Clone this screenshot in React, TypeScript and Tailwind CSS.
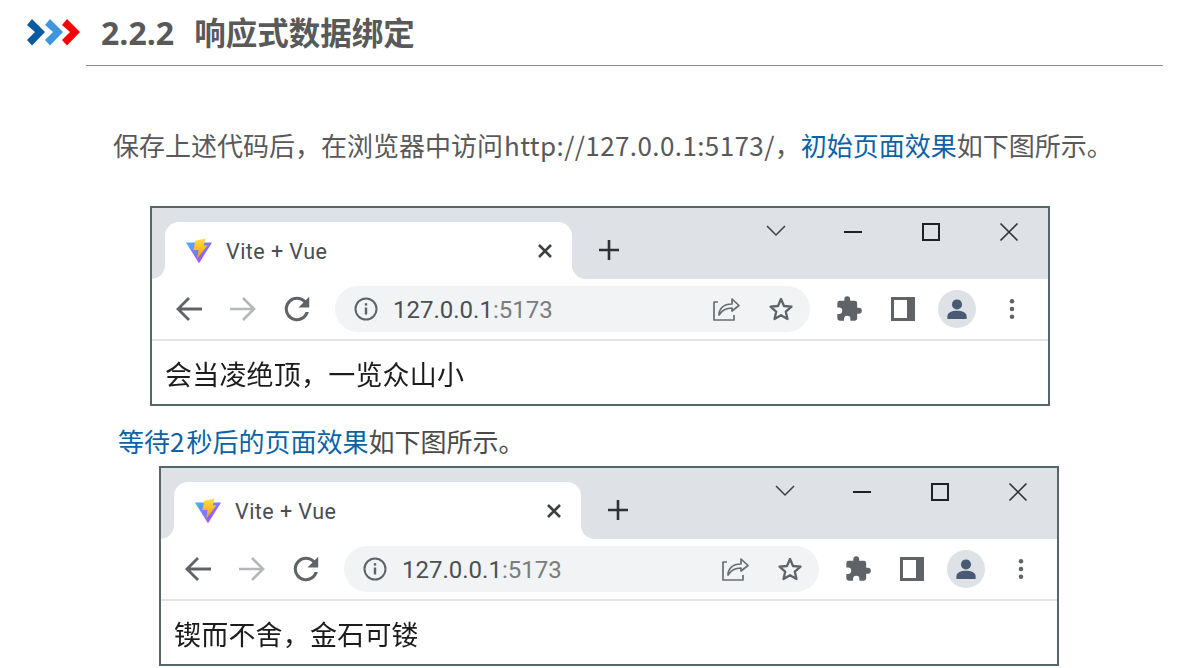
const CJK = "font-['Noto_Sans_CJK_SC','Noto_Sans',sans-serif]";

function Chevrons() {
  return (
    <svg width="54" height="28" viewBox="0 0 54 28" className="shrink-0">
      <polygon points="0,7 5,1 18,14 5,27.5 0,22 8,14" fill="#0a5aa3" />
      <polygon points="18,7 23,1 36,14 23,27.5 18,22 26,14" fill="#4096de" />
      <polygon points="35,7 40,1 53,14 40,27.5 35,22 43,14" fill="#fb0007" />
    </svg>
  );
}

function Favicon() {
  return (
    <svg width="28" height="28" viewBox="0 0 30 28">
      <defs>
        <linearGradient id="vb" x1="0" y1="0" x2="1" y2="1">
          <stop offset="0" stopColor="#41b5ff" />
          <stop offset="1" stopColor="#bd34fe" />
        </linearGradient>
        <linearGradient id="vy" x1="0" y1="0" x2="0" y2="1">
          <stop offset="0" stopColor="#ffe04a" />
          <stop offset="1" stopColor="#ff9a00" />
        </linearGradient>
      </defs>
      <polygon points="1,5 29,5 15,27" fill="url(#vb)" />
      <polygon points="11,3 22,0.500 20,8 24,8 13,22 14.500,13 9,13" fill="url(#vy)" />
    </svg>
  );
}

function Tab() {
  return (
    <div className="relative flex h-[57px] w-[407px] items-center rounded-t-[14px] bg-white pl-[20px] pr-[18px]">
      <span className="absolute bottom-0 left-[-14px] h-[14px] w-[14px] bg-white">
        <span className="block h-full w-full rounded-br-[14px] bg-[#dee1e6]" />
      </span>
      <span className="absolute bottom-0 right-[-14px] h-[14px] w-[14px] bg-white">
        <span className="block h-full w-full rounded-bl-[14px] bg-[#dee1e6]" />
      </span>
      <Favicon />
      <span className="ml-[13px] mt-[3px] font-['Roboto',sans-serif] text-[21.5px] tracking-[0.45px] text-[#4a4d51]">Vite + Vue</span>
      <svg width="18" height="18" viewBox="0 0 18 18" className="ml-auto" stroke="#3c4043" strokeWidth="2.6" fill="none">
        <path d="M3 3l12 12M15 3L3 15" />
      </svg>
    </div>
  );
}

function WindowControls() {
  return (
    <div className="ml-auto flex h-full items-start">
      <svg width="22" height="14" viewBox="0 0 22 14" className="mt-[16px]" stroke="#3c4043" strokeWidth="1.5" fill="none">
        <path d="M2 2l9 9 9-9" />
      </svg>
      <svg width="20" height="4" viewBox="0 0 20 4" className="ml-[56px] mt-[22px]" stroke="#202124" strokeWidth="2" fill="none">
        <path d="M1 2h18" />
      </svg>
      <svg width="18" height="18" viewBox="0 0 18 18" className="ml-[59px] mt-[15px]" stroke="#202124" strokeWidth="2" fill="none">
        <rect x="1" y="1" width="16" height="16" />
      </svg>
      <svg width="20" height="20" viewBox="0 0 20 20" className="ml-[59px] mr-[29px] mt-[14px]" stroke="#303236" strokeWidth="1.7" fill="none">
        <path d="M1.500 1.500l17 17M18.500 1.500l-17 17" />
      </svg>
    </div>
  );
}

function TabStrip() {
  return (
    <div className="flex h-[71px] items-end bg-[#dee1e6] pl-[13px]">
      <Tab />
      <svg width="24" height="24" viewBox="0 0 24 24" className="mb-[17px] ml-[25px]" stroke="#2f3134" strokeWidth="2.6" fill="none">
        <path d="M12 2v20M2 12h20" />
      </svg>
      <WindowControls />
    </div>
  );
}

function Toolbar() {
  return (
    <div className="flex h-[62px] items-center border-b-2 border-[#e3e4e6] bg-white">
      <svg width="28" height="28" viewBox="0 0 28 28" className="ml-[23px]" stroke="#5f6368" strokeWidth="2.8" fill="none">
        <path d="M27 14H3M14 3L3 14l11 11" />
      </svg>
      <svg width="28" height="28" viewBox="0 0 28 28" className="ml-[26px]" stroke="#b5b7ba" strokeWidth="2.6" fill="none">
        <path d="M1 14h24M14 3l11 11-11 11" />
      </svg>
      <svg width="26" height="26" viewBox="3.500 3.500 17 17" className="ml-[27px]" fill="#5f6368">
        <path d="M17.650 6.350A7.960 7.960 0 0 0 12 4a8 8 0 1 0 7.730 10h-2.080A6 6 0 1 1 12 6c1.660 0 3.140.690 4.220 1.780L13 11h7V4l-2.350 2.350z" />
      </svg>
      <div className="ml-[25px] flex h-[46px] w-[475px] items-center rounded-full bg-[#f1f3f4] pl-[18px]">
        <svg width="26" height="26" viewBox="0 0 26 26" fill="none" stroke="#5f6368" strokeWidth="2">
          <circle cx="13" cy="13" r="10.500" />
          <path d="M13 11.500v7" strokeWidth="2.400" />
          <path d="M13 7.200v2.400" strokeWidth="2.400" />
        </svg>
        <span className="ml-[14px] mt-[2px] font-['Roboto',sans-serif] text-[24px] leading-none text-[#4c4f53]">
          127.0.0.1<span className="text-[#797c80]">:5173</span>
        </span>
        <svg width="28" height="26" viewBox="0 0 28 26" className="ml-[160px]" fill="none" stroke="#6a6d71" strokeWidth="1.700" strokeLinejoin="round">
          <path d="M5 6H1V24H21V19" />
          <path d="M6 19C6 13 10 8 19 8V3L26 9.500 19 15V12C14 12 9 14 6 19z" />
        </svg>
        <svg width="26" height="26" viewBox="0 0 26 26" className="ml-[27px]" fill="none" stroke="#5f6368" strokeWidth="2.300" strokeLinejoin="round">
          <path d="M13 3l3 7 7.500.700-5.700 5 1.700 7.300L13 19.200 6.500 23l1.700-7.300-5.700-5L10 10z" />
        </svg>
      </div>
      <svg width="28" height="28" viewBox="0 0 24 24" className="ml-[25px]" fill="#5f6368">
        <path d="M20.500 11H19V7a2 2 0 0 0-2-2h-4V3.500a2.500 2.500 0 0 0-5 0V5H4a2 2 0 0 0-2 2v3.800h1.500a2.700 2.700 0 0 1 0 5.400H2V20a2 2 0 0 0 2 2h3.800v-1.500a2.700 2.700 0 0 1 5.400 0V22H17a2 2 0 0 0 2-2v-4h1.500a2.500 2.500 0 0 0 0-5z" />
      </svg>
      <div className="ml-[28px] flex h-[24px] w-[24px] justify-end border-[3px] border-[#5f6368] bg-white">
        <span className="h-full w-[5px] bg-[#5f6368]" />
      </div>
      <div className="ml-[23px] flex h-[38px] w-[38px] items-center justify-center rounded-full bg-[#dee1e6]">
        <svg width="22" height="22" viewBox="0 0 24 24" fill="#4a5a75">
          <circle cx="12" cy="7" r="5.500" />
          <path d="M1.500 23v-3c0-4 5-6 10.500-6s10.500 2 10.500 6v3z" />
        </svg>
      </div>
      <svg width="6" height="22" viewBox="0 0 6 24" className="ml-[33px]" fill="#5f6368">
        <circle cx="3" cy="3.500" r="2.500" />
        <circle cx="3" cy="12" r="2.500" />
        <circle cx="3" cy="20.500" r="2.500" />
      </svg>
    </div>
  );
}

function Browser({ text, className }: { text: string; className: string }) {
  return (
    <div className={`w-[900px] overflow-hidden border-2 border-[#566767] bg-white ${className}`}>
      <div className="blur-[0.35px]">
        <TabStrip />
        <Toolbar />
        <div className={`flex h-[63px] items-center pl-[13px] pt-[2px] text-[27px] leading-none tracking-[0.2px] text-[#1c1c1c] ${CJK}`}>{text}</div>
      </div>
    </div>
  );
}

export default function App() {
  return (
    <div className={`h-[668px] w-[1197px] overflow-hidden bg-white ${CJK}`}>
      <header className="flex h-[65px] items-center pb-[1px] pl-[27px]">
        <Chevrons />
        <h1 className="ml-[20px] text-[31.500px] font-bold leading-none text-[#595959]">
          <span className="font-['Open_Sans',sans-serif] text-[32px]">2.2.2</span>
          <span className="ml-[20px]">响应式数据绑定</span>
        </h1>
      </header>
      <div className="ml-[86px] h-px w-[1077px] bg-[#8c8c8c]" />
      <p className="ml-[113px] mt-[61px] text-[26px] leading-[36px] text-[#595959]">
        保存上述代码后，在浏览器中访问<span className="ml-[1px] tracking-[0.4px]">http://127.0.0.1:5173/</span>，<span className="text-[#0b62a8]">初始页面效果</span>如下图所示。
      </p>
      <Browser text="会当凌绝顶，一览众山小" className="ml-[150px] mt-[43px]" />
      <p className="ml-[118px] mt-[17px] text-[26px] leading-[36px] text-[#4a4a4a]">
        <span className="text-[#0b62a8]">等待<span className="tracking-[2px]">2</span>秒后的页面效果</span>如下图所示。
      </p>
      <Browser text="锲而不舍，金石可镂" className="ml-[159px] mt-[7px]" />
    </div>
  );
}
